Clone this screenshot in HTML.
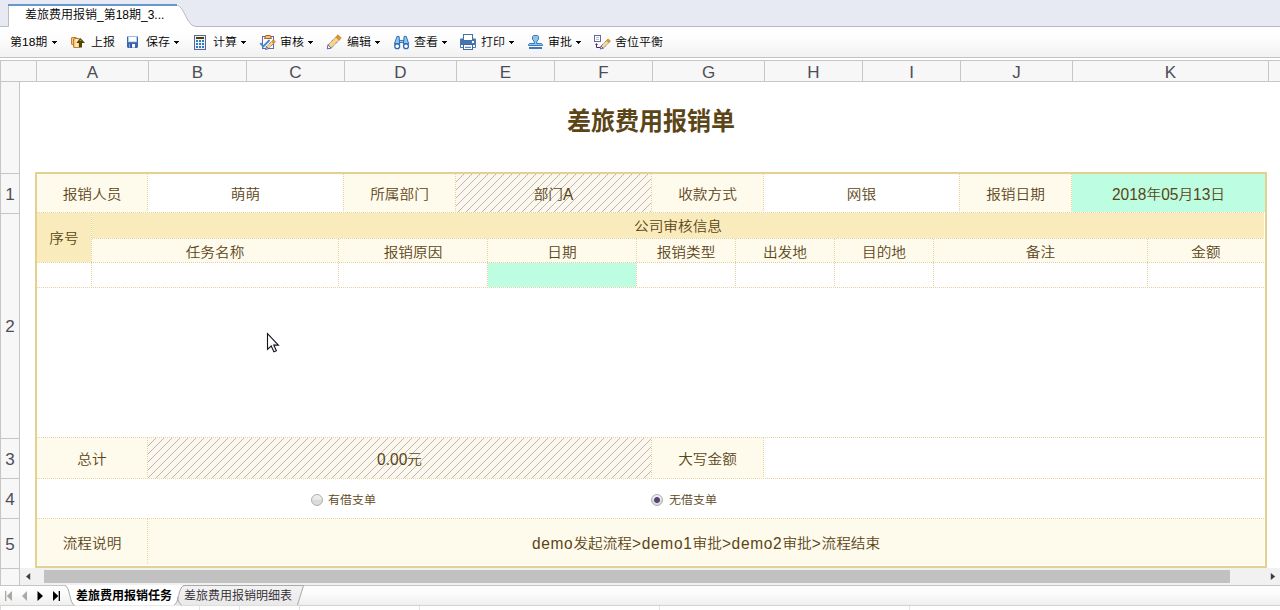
<!DOCTYPE html>
<html lang="zh-CN">
<head>
<meta charset="utf-8">
<title>差旅费用报销</title>
<style>
html,body{margin:0;padding:0;}
body{width:1280px;height:610px;overflow:hidden;background:#fff;position:relative;
  font-family:"Liberation Sans","Noto Sans CJK SC",sans-serif;font-size:12px;color:#000;font-weight:350;}
.abs{position:absolute;}
/* top tab bar */
#tabbar{left:0;top:0;width:1280px;height:27px;background:#e7eaf3;}
#tabtxt{left:25px;top:7px;height:16px;line-height:16px;font-size:12px;color:#000;white-space:nowrap;}
/* toolbar */
#toolbar{left:0;top:27px;width:1280px;height:30px;background:linear-gradient(#ffffff 0%,#fdfdfd 40%,#f1f1f1 100%);border-bottom:1px solid #c3c3c3;}
.tb{position:absolute;top:7px;height:18px;line-height:18px;font-size:12px;white-space:nowrap;color:#000;transform:scaleY(.94);transform-origin:50% 22%;}
.arr{position:absolute;top:14px;width:0;height:0;border-left:2.5px solid transparent;border-right:2.5px solid transparent;border-top:3px solid #111;}
.ico{position:absolute;}
/* grid */
#colhdr{left:0;top:60px;width:1280px;height:20px;background:#f7f7f7;border-top:1px solid #c6c6c6;border-bottom:1px solid #c6c6c6;box-sizing:content-box;}
.ch{position:absolute;top:61px;height:20px;line-height:23px;font-size:17px;color:#4d4d57;text-align:center;border-left:1px solid #c6c6c6;box-sizing:border-box;}
#rowhdr{left:0;top:82px;width:18px;height:503px;background:#f7f7f7;border-left:1px solid #c6c6c6;border-right:1px solid #c6c6c6;}
.rh{position:absolute;left:1px;width:18px;border-top:1px solid #c6c6c6;font-size:17px;color:#4d4d57;text-align:center;}
/* sheet */
.cell{position:absolute;box-sizing:border-box;font-size:14.67px;color:#5b4516;text-align:center;white-space:nowrap;}
.t{display:inline-block;transform:scaleY(.9);transform-origin:50% 50%;position:relative;top:1px;line-height:20px;}
.lt,.lw{display:inline-block;transform:scaleY(1.12);transform-origin:50% 10%;font-size:15.5px;letter-spacing:0;}
.lw{letter-spacing:.68px;}
.lab{background:#fefaec;}
.band{background:#f9ebbc;}
.grn{background:#bdfde1;}
.hatch{background:#fdf9ec repeating-linear-gradient(135deg,transparent 0,transparent 4.3px,#b9b5aa 4.3px,#b9b5aa 5px);}
.hd{position:absolute;height:1px;background:repeating-linear-gradient(90deg,#e6d296 0,#e6d296 1px,transparent 1px,transparent 2px);}
.vd{position:absolute;width:1px;background:repeating-linear-gradient(180deg,#e6d296 0,#e6d296 1px,transparent 1px,transparent 2px);}

.radio{width:10px;height:10px;border-radius:50%;border:1px solid #adadad;background:linear-gradient(#f0f0f0 0,#e7e7e7 45%,#d9d9d9 50%,#dddddd 100%);box-sizing:content-box;}
.radio.on{background:radial-gradient(circle at 50% 50%,#5a4176 0,#5a4176 2.5px,rgba(90,65,118,0) 3.4px),linear-gradient(#f0f0f0 0,#e7e7e7 45%,#d9d9d9 50%,#dddddd 100%);}
.rtxt{font-size:12px;line-height:18px;height:18px;color:#5b4516;white-space:nowrap;transform:scaleY(.93);transform-origin:50% 80%;}
</style>
</head>
<body>
<!-- TABBAR -->
<div id="tabbar" class="abs">
<svg class="abs" style="left:0;top:0" width="1280" height="27" viewBox="0 0 1280 27">
  <path d="M8.5 27 L8.5 4 L177 4 C185 6 186.5 26.5 196 26.5 L1280 26.5 L1280 27 Z" fill="#ffffff"/>
  <path d="M0 26.5 L8.5 26.5 L8.5 5" fill="none" stroke="#bdbdbd" stroke-width="1"/>
  <path d="M177 5 C185 7 186.5 26.5 196 26.5 L1280 26.5" fill="none" stroke="#b9b9b9" stroke-width="1"/>
  <rect x="8" y="4" width="169" height="2" fill="#6a97cb"/>
</svg>
<div id="tabtxt" class="abs">差旅费用报销_第18期_3...</div>
</div>
<!-- TOOLBAR -->
<div id="toolbar" class="abs">
<svg class="abs" style="left:0;top:0" width="700" height="30" viewBox="0 27 700 30" shape-rendering="auto">
<defs>
<linearGradient id="gbox" x1="0" y1="0" x2="1" y2="0"><stop offset="0" stop-color="#f3b04c"/><stop offset="0.55" stop-color="#fff6e4"/><stop offset="1" stop-color="#f2b352"/></linearGradient>
</defs>
<g fill="#0a0a0a" shape-rendering="crispEdges"><path d="M52 41h5v1h-1v1h-1v1h-1v-1h-1v-1h-1z"/><path d="M174 41h5v1h-1v1h-1v1h-1v-1h-1v-1h-1z"/><path d="M241 41h5v1h-1v1h-1v1h-1v-1h-1v-1h-1z"/><path d="M308 41h5v1h-1v1h-1v1h-1v-1h-1v-1h-1z"/><path d="M375 41h5v1h-1v1h-1v1h-1v-1h-1v-1h-1z"/><path d="M442 41h5v1h-1v1h-1v1h-1v-1h-1v-1h-1z"/><path d="M509 41h5v1h-1v1h-1v1h-1v-1h-1v-1h-1z"/><path d="M576 41h5v1h-1v1h-1v1h-1v-1h-1v-1h-1z"/></g>
<!-- shangbao -->
<rect x="71.5" y="37.5" width="5" height="7" rx="0.6" fill="url(#gbox)" stroke="#c47a2c" stroke-width="1"/>
<rect x="73.5" y="38.5" width="6" height="9" rx="0.6" fill="url(#gbox)" stroke="#c47a2c" stroke-width="1"/>
<path d="M80.5 38 L85 43 L82 43 L82 47.5 L79 47.5 L79 43 L76.2 43 Z" fill="#4f4700"/>
<path d="M80.5 39.4 L81.6 40.8 L79.4 40.8 Z" fill="#d9a24a"/>
<!-- save -->
<path d="M128 36 L137 36 L138 37 L138 47 L137 48 L128 48 L127 47 L127 37 Z" fill="#3f62ab"/>
<rect x="128.3" y="36.6" width="8.4" height="5.3" fill="#ffffff"/>
<rect x="128.3" y="36.6" width="8.4" height="5.3" fill="none" stroke="#9fd0f2" stroke-width="0.6"/>
<rect x="129" y="44" width="1.4" height="3.6" fill="#6fb2ea"/>
<rect x="130.4" y="44" width="1.4" height="3.6" fill="#2b4a96"/>
<rect x="132" y="44" width="3" height="3.6" fill="#ffffff"/>
<!-- calc -->
<rect x="194.5" y="35.5" width="11" height="14" fill="#f1f1f4" stroke="#5c62a0" stroke-width="1"/>
<rect x="196" y="37" width="8" height="2" fill="#4a4200"/>
<g fill="#2e7cc0">
<rect x="196" y="40" width="2" height="2"/><rect x="199" y="40" width="2" height="2"/><rect x="202" y="40" width="2" height="2"/>
<rect x="196" y="43" width="2" height="2"/><rect x="199" y="43" width="2" height="2"/><rect x="202" y="43" width="2" height="2"/>
<rect x="196" y="46" width="2" height="2"/><rect x="199" y="46" width="2" height="2"/><rect x="202" y="46" width="2" height="2"/>
</g>
<!-- audit: clipboard + check + pencil -->
<rect x="262.5" y="36.5" width="11" height="12" fill="#ffffff" stroke="#6267a6" stroke-width="1"/>
<path d="M264.5 38.5 L265.8 35.5 L270.2 35.5 L271.5 38.5 Z" fill="#f6c46a" stroke="#a8541a" stroke-width="0.9"/>
<path d="M260.3 43.2 L263.3 46.3 L269.6 40" fill="none" stroke="#3e89c9" stroke-width="1.9"/>
<path d="M266.41 46.64 L271.65 41.40 L273.70 43.45 L268.46 48.69 Z" fill="#fbd380"/><path d="M266.41 46.64 L271.65 41.40 M268.46 48.69 L273.70 43.45" fill="none" stroke="#4b55a2" stroke-width="1" stroke-dasharray="1 0.9"/><path d="M265.60 49.50 L266.41 46.64 L268.46 48.69 Z" fill="#ffffff" stroke="#4b55a2" stroke-width="0.9" stroke-linejoin="round"/><path d="M271.65 41.40 L273.34 39.71 L275.39 41.76 L273.70 43.45 Z" fill="#dd9634" stroke="#c27a26" stroke-width="0.7" stroke-linejoin="round"/>
<!-- edit pencil -->
<path d="M327.98 44.87 L335.90 36.95 L339.15 40.20 L331.23 48.12 Z" fill="#fbd380"/><path d="M327.98 44.87 L335.90 36.95 M331.23 48.12 L339.15 40.20" fill="none" stroke="#4b55a2" stroke-width="1" stroke-dasharray="1 0.9"/><path d="M327.20 48.90 L327.98 44.87 L331.23 48.12 Z" fill="#ffffff" stroke="#4b55a2" stroke-width="0.9" stroke-linejoin="round"/><path d="M335.90 36.95 L338.02 34.83 L341.27 38.08 L339.15 40.20 Z" fill="#dd9634" stroke="#c27a26" stroke-width="0.7" stroke-linejoin="round"/>
<!-- binoculars -->
<rect x="399.4" y="40.4" width="4.4" height="2.2" fill="#8cc8f0" stroke="#2f6cb3" stroke-width="0.9"/>
<path d="M397 36.4 L399.1 36.4 L399.7 44 L394.4 44 Z" fill="#8cc8f0" stroke="#2f6cb3" stroke-width="1" stroke-linejoin="round"/>
<path d="M404.1 36.4 L406.2 36.4 L408.8 44 L403.5 44 Z" fill="#8cc8f0" stroke="#2f6cb3" stroke-width="1" stroke-linejoin="round"/>
<circle cx="397.2" cy="46.2" r="2.45" fill="#ffffff" stroke="#2f6cb3" stroke-width="1.3"/>
<circle cx="406" cy="46.2" r="2.45" fill="#ffffff" stroke="#2f6cb3" stroke-width="1.3"/>
<!-- printer -->
<rect x="460" y="38.5" width="16" height="9.5" rx="1" fill="#4676ab"/>
<rect x="463.5" y="34.5" width="9" height="6" fill="#ffffff" stroke="#3f73ad" stroke-width="1"/>
<rect x="472" y="41" width="2" height="2" fill="#ffffff"/>
<rect x="461" y="45" width="2" height="2" fill="#ffffff"/>
<rect x="473" y="45" width="2" height="2" fill="#ffffff"/>
<rect x="463.5" y="44.5" width="9" height="5" fill="#ffffff" stroke="#3f69a6" stroke-width="1"/>
<rect x="465" y="46.8" width="6" height="1" fill="#3f73ad"/>
<!-- stamp -->
<path d="M533.5 35.5 L537.5 35.5 L538.5 36.5 L538.5 39.5 L537 41 L536.5 43.5 L541.5 43.5 L542.5 44.5 L542.5 45.5 L528.5 45.5 L528.5 44.5 L529.5 43.5 L534.5 43.5 L534 41 L532.5 39.5 L532.5 36.5 Z" fill="#8ac3ec" stroke="#3a7abd" stroke-width="1"/>
<rect x="529" y="47" width="13" height="2" fill="#3a7abd"/>
<!-- rounding -->
<rect x="594.5" y="35.5" width="6" height="6" fill="#ffffff" stroke="#6267a6" stroke-width="1"/>
<rect x="596" y="37" width="3" height="1" fill="#bdbdbd"/><rect x="596" y="39" width="3" height="1" fill="#bdbdbd"/>
<path d="M596.5 44 L596.5 47.5 L600.5 47.5" fill="none" stroke="#4b2d5a" stroke-width="1"/>
<path d="M595 45 L596.5 43 L598 45 Z" fill="#4b2d5a"/>
<path d="M601.01 46.03 L606.52 40.51 L608.79 42.78 L603.27 48.29 Z" fill="#fcd98e"/><path d="M601.01 46.03 L606.52 40.51 M603.27 48.29 L608.79 42.78" fill="none" stroke="#4b55a2" stroke-width="1" stroke-dasharray="1 0.9"/><path d="M600.30 49.00 L601.01 46.03 L603.27 48.29 Z" fill="#ffffff" stroke="#4b55a2" stroke-width="0.9" stroke-linejoin="round"/><path d="M606.52 40.51 L608.15 38.89 L610.41 41.15 L608.79 42.78 Z" fill="#dd9634" stroke="#c27a26" stroke-width="0.7" stroke-linejoin="round"/>
</svg>
<div class="tb" style="left:10px">第18期</div>
<div class="tb" style="left:91px">上报</div>
<div class="tb" style="left:146px">保存</div>
<div class="tb" style="left:213px">计算</div>
<div class="tb" style="left:280px">审核</div>
<div class="tb" style="left:347px">编辑</div>
<div class="tb" style="left:414px">查看</div>
<div class="tb" style="left:481px">打印</div>
<div class="tb" style="left:548px">审批</div>
<div class="tb" style="left:615px">舍位平衡</div>
</div>
<!-- GRID -->
<div id="colhdr" class="abs"></div>
<div class="ch" style="left:36px;width:112px">A</div>
<div class="ch" style="left:148px;width:98px">B</div>
<div class="ch" style="left:246px;width:98px">C</div>
<div class="ch" style="left:344px;width:112px">D</div>
<div class="ch" style="left:456px;width:98px">E</div>
<div class="ch" style="left:554px;width:98px">F</div>
<div class="ch" style="left:652px;width:112px">G</div>
<div class="ch" style="left:764px;width:98px">H</div>
<div class="ch" style="left:862px;width:98px">I</div>
<div class="ch" style="left:960px;width:112px">J</div>
<div class="ch" style="left:1072px;width:196px">K</div>
<div class="ch" style="left:1268px;width:12px"></div>
<div class="abs" style="left:0;top:60px;width:1px;height:22px;background:#c6c6c6"></div>
<div id="rowhdr" class="abs"></div>
<div class="rh" style="top:173px;height:39px;line-height:41px">1</div>
<div class="rh" style="top:213px;height:224px;line-height:226px">2</div>
<div class="rh" style="top:438px;height:39px;line-height:41px">3</div>
<div class="rh" style="top:478px;height:39px;line-height:41px">4</div>
<div class="rh" style="top:518px;height:49px;line-height:51px">5</div>
<div class="rh" style="top:568px;height:16px;line-height:18px"></div>
<!-- SHEET -->
<svg width="0" height="0" style="position:absolute"><defs><pattern id="hp" width="8" height="8" patternUnits="userSpaceOnUse"><path d="M-1 9 L9 -1 M-1 1 L1 -1 M7 9 L9 7" stroke="#b0b0b0" stroke-width="0.9" fill="none"/></pattern></defs></svg>
<div class="abs" id="title" style="left:451px;top:105px;width:400px;height:34px;line-height:34px;transform:scaleY(1.02);transform-origin:50% 50%;text-align:center;font-size:24px;font-weight:bold;color:#5b4516;">差旅费用报销单</div>
<div class="abs" style="left:35px;top:172px;width:1228px;height:392px;border:2px solid #e4d08f;"></div>
<div class="cell lab" style="left:37px;top:174px;width:110px;height:38px;line-height:38px;"><span class="t">报销人员</span></div>
<div class="cell " style="left:148px;top:174px;width:195px;height:38px;line-height:38px;"><span class="t">萌萌</span></div>
<div class="cell lab" style="left:344px;top:174px;width:111px;height:38px;line-height:38px;"><span class="t">所属部门</span></div>
<svg class="abs" style="left:456px;top:174px" width="195" height="38"><rect width="195" height="38" fill="#fcf8ee"/><rect width="195" height="38" fill="url(#hp)"/></svg>
<div class="cell " style="left:456px;top:174px;width:195px;height:38px;line-height:38px;"><span class="t">部门<span class="lt">A</span></span></div>
<div class="cell lab" style="left:652px;top:174px;width:111px;height:38px;line-height:38px;"><span class="t">收款方式</span></div>
<div class="cell " style="left:764px;top:174px;width:195px;height:38px;line-height:38px;"><span class="t">网银</span></div>
<div class="cell lab" style="left:960px;top:174px;width:111px;height:38px;line-height:38px;"><span class="t">报销日期</span></div>
<div class="cell grn" style="left:1072px;top:174px;width:193px;height:38px;line-height:38px;"><span class="t"><span class="lt">2018</span>年<span class="lt">05</span>月<span class="lt">13</span>日</span></div>
<div class="vd" style="left:147px;top:174px;height:38px"></div>
<div class="vd" style="left:343px;top:174px;height:38px"></div>
<div class="vd" style="left:455px;top:174px;height:38px"></div>
<div class="vd" style="left:651px;top:174px;height:38px"></div>
<div class="vd" style="left:763px;top:174px;height:38px"></div>
<div class="vd" style="left:959px;top:174px;height:38px"></div>
<div class="vd" style="left:1071px;top:174px;height:38px"></div>
<div class="hd" style="left:37px;top:212px;width:1227px"></div>
<div class="cell band" style="left:37px;top:213px;width:54px;height:49px;line-height:49px;"><span class="t">序号</span></div>
<div class="cell band" style="left:92px;top:213px;width:1172px;height:25px;line-height:25px;"><span class="t">公司审核信息</span></div>
<div class="vd" style="left:91px;top:213px;height:74px"></div>
<div class="hd" style="left:92px;top:238px;width:1172px"></div>
<div class="cell lab" style="left:92px;top:239px;width:246px;height:23px;line-height:25px;"><span class="t">任务名称</span></div>
<div class="cell lab" style="left:339px;top:239px;width:148px;height:23px;line-height:25px;"><span class="t">报销原因</span></div>
<div class="cell lab" style="left:488px;top:239px;width:148px;height:23px;line-height:25px;"><span class="t">日期</span></div>
<div class="cell lab" style="left:637px;top:239px;width:98px;height:23px;line-height:25px;"><span class="t">报销类型</span></div>
<div class="cell lab" style="left:736px;top:239px;width:98px;height:23px;line-height:25px;"><span class="t">出发地</span></div>
<div class="cell lab" style="left:835px;top:239px;width:98px;height:23px;line-height:25px;"><span class="t">目的地</span></div>
<div class="cell lab" style="left:934px;top:239px;width:213px;height:23px;line-height:25px;"><span class="t">备注</span></div>
<div class="cell lab" style="left:1148px;top:239px;width:116px;height:23px;line-height:25px;"><span class="t">金额</span></div>
<div class="vd" style="left:338px;top:239px;height:48px"></div>
<div class="vd" style="left:487px;top:239px;height:48px"></div>
<div class="vd" style="left:636px;top:239px;height:48px"></div>
<div class="vd" style="left:735px;top:239px;height:48px"></div>
<div class="vd" style="left:834px;top:239px;height:48px"></div>
<div class="vd" style="left:933px;top:239px;height:48px"></div>
<div class="vd" style="left:1147px;top:239px;height:48px"></div>
<div class="hd" style="left:37px;top:262px;width:1227px"></div>
<div class="cell grn" style="left:488px;top:263px;width:148px;height:24px;line-height:24px;"></div>
<div class="hd" style="left:37px;top:287px;width:1227px"></div>
<div class="hd" style="left:37px;top:437px;width:1227px"></div>
<div class="cell lab" style="left:37px;top:438px;width:110px;height:40px;line-height:40px;"><span class="t">总计</span></div>
<svg class="abs" style="left:148px;top:438px" width="503" height="40"><rect width="503" height="40" fill="#fcf8ee"/><rect width="503" height="40" fill="url(#hp)"/></svg>
<div class="cell " style="left:148px;top:438px;width:503px;height:40px;line-height:40px;"><span class="t"><span class="lt">0.00</span>元</span></div>
<div class="cell lab" style="left:652px;top:438px;width:111px;height:40px;line-height:40px;"><span class="t">大写金额</span></div>
<div class="vd" style="left:147px;top:438px;height:40px"></div>
<div class="vd" style="left:651px;top:438px;height:40px"></div>
<div class="vd" style="left:763px;top:438px;height:40px"></div>
<div class="hd" style="left:37px;top:478px;width:1227px"></div>
<div class="abs radio" style="left:311px;top:494px"></div><div class="abs rtxt" style="left:328px;top:491px">有借支单</div>
<div class="abs radio on" style="left:651px;top:494px"></div><div class="abs rtxt" style="left:669px;top:491px">无借支单</div>
<div class="hd" style="left:37px;top:518px;width:1227px"></div>
<div class="cell lab" style="left:37px;top:519px;width:110px;height:46px;line-height:47px;"><span class="t">流程说明</span></div>
<div class="cell lab" style="left:148px;top:519px;width:1116px;height:46px;line-height:47px;"><span class="t"><span class="lw">demo</span>发起流程<span class="lw">&gt;demo1</span>审批<span class="lw">&gt;demo2</span>审批<span class="lw">&gt;</span>流程结束</span></div>
<div class="vd" style="left:147px;top:519px;height:46px"></div>
<svg class="abs" style="left:260px;top:328px" width="30" height="30" viewBox="260 328 30 30">
<defs><linearGradient id="gcur" x1="0" y1="0" x2="1" y2="1"><stop offset="0.35" stop-color="#ffffff"/><stop offset="1" stop-color="#dcdcdc"/></linearGradient></defs><path d="M267.5 333.7 L267.5 349.3 L271.2 346 L273.9 351.9 L276.4 350.8 L273.8 345.1 L278.4 345.1 Z" fill="url(#gcur)" stroke="#15101a" stroke-width="1.1" stroke-linejoin="miter"/>
</svg>
<!-- BOTTOM -->
<div class="abs" style="left:20px;top:568px;width:1260px;height:17px;background:#f1f1f1"></div>
<div class="abs" style="left:44px;top:570px;width:1186px;height:13px;background:#c1c1c1"></div>
<svg class="abs" style="left:20px;top:568px" width="1260" height="17" viewBox="20 568 1260 17">
<path d="M30.2 573 L30.2 580 L26 576.5 Z" fill="#403a48"/>
<path d="M1270.8 573 L1270.8 580 L1275.2 576.5 Z" fill="#403a48"/>
</svg>
<div class="abs" style="left:0;top:586px;width:1280px;height:19px;background:linear-gradient(#ffffff 0%,#fbfbfb 40%,#efefef 100%)"></div>
<div class="abs" style="left:0;top:585px;width:1280px;height:1px;background:#c4c4c4"></div>
<div class="abs" style="left:0;top:605px;width:1280px;height:1px;background:#d2d2d2"></div>
<div class="abs" style="left:0;top:606px;width:1px;height:4px;background:#dcdcdc"></div>
<div class="abs" style="left:199px;top:606px;width:1px;height:4px;background:#e3e3e3"></div>
<div class="abs" style="left:239px;top:606px;width:1px;height:4px;background:#e3e3e3"></div>
<div class="abs" style="left:299px;top:606px;width:1px;height:4px;background:#e3e3e3"></div>
<div class="abs" style="left:419px;top:606px;width:1px;height:4px;background:#e3e3e3"></div>
<div class="abs" style="left:659px;top:606px;width:1px;height:4px;background:#e3e3e3"></div>
<div class="abs" style="left:909px;top:606px;width:1px;height:4px;background:#e3e3e3"></div>
<svg class="abs" style="left:0;top:585px" width="400" height="21" viewBox="0 585 400 21">
<defs><linearGradient id="gtab" x1="0" y1="0" x2="0" y2="1"><stop offset="0" stop-color="#f3f3f3"/><stop offset="1" stop-color="#e9e9e9"/></linearGradient></defs>
<!-- active tab (white) -->
<path d="M65 585 C70 586 70 604 75 605.5 L181.5 605.5 C178 604 178 598 177.5 597 L183 585 Z" fill="#ffffff"/>
<!-- inactive tab -->
<path d="M174 605.5 C179 604 178 587 184 585.5 L303.5 585.5 L297.5 605.5 Z" fill="url(#gtab)"/>
<path d="M174 605 C179 604 178 587 184 585.5 L303.5 585.5 L297.5 605" fill="none" stroke="#a9a9a9" stroke-width="1"/>
<path d="M177.3 597 C178.5 601 179 604 181.5 605" fill="none" stroke="#a9a9a9" stroke-width="1"/>
<path d="M65 585.5 C70 586.5 69.5 604 74.5 605" fill="none" stroke="#a9a9a9" stroke-width="1"/>
<!-- nav arrows -->
<g fill="#a9a9a3"><rect x="5" y="591" width="1.3" height="10"/><path d="M12 591 L12 601 L6.8 596 Z"/><path d="M27 591 L27 601 L22 596 Z"/></g>
<g fill="#000000"><path d="M37.5 591 L37.5 601 L43 596 Z"/><path d="M53 591 L53 601 L58.3 596 Z"/><rect x="58.7" y="591" width="1.3" height="10"/></g>
</svg>
<div class="abs" style="left:76px;top:588px;height:17px;line-height:17px;font-size:12px;font-weight:bold;color:#000;white-space:nowrap">差旅费用报销任务</div>
<div class="abs" style="left:184px;top:588px;height:17px;line-height:17px;font-size:12px;color:#2e2830;white-space:nowrap">差旅费用报销明细表</div>
</body>
</html>
